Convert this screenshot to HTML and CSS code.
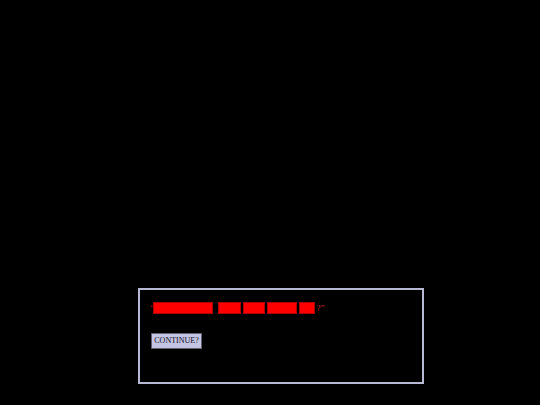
FILE: index.html
```html
<!DOCTYPE html>
<html>
<head>
<meta charset="utf-8">
<link rel="stylesheet" href="styles.css">
</head>
<body>
<div class="dialog">
  <div class="line">
    <span class="mark q">“</span>
    <span class="word w1"></span>
    <span class="mark comma">,</span>
    <span class="word w2"></span>
    <span class="word w3"></span>
    <span class="word w4"></span>
    <span class="word w5"></span>
    <span class="mark end">?”</span>
  </div>
  <button class="btn">CONTINUE?</button>
</div>
</body>
</html>
```
FILE: styles.css
```css
html, body {
  margin: 0;
  background: #000;
}
body {
  width: 540px;
  height: 405px;
  box-sizing: border-box;
  padding: 288px 0 0 138px;
  font-family: "Liberation Serif", serif;
}
.dialog {
  width: 286px;
  height: 96px;
  box-sizing: border-box;
  border: 2px solid #b8b8d4;
  padding: 12px 0 0 10px;
}
.line {
  display: flex;
  align-items: center;
  height: 12px;
}
.word {
  display: inline-block;
  height: 12px;
  box-sizing: border-box;
  background: #ff0000;
  border: 1px solid #b00000;
}
.w1 { width: 60px; }
.w2 { width: 23px; }
.w3 { width: 22px; margin-left: 2px; }
.w4 { width: 30px; margin-left: 2px; }
.w5 { width: 16px; margin-left: 2px; }
.mark {
  color: #b00000;
  font-size: 8px;
  line-height: 12px;
}
.q { margin-right: -1px; }
.comma { margin-left: 1px; margin-right: 2px; color: #500000; }
.end { margin-left: 2px; color: #d02020; font-size: 9px; }
.btn {
  display: block;
  margin: 19px 0 0 1px;
  width: 51px;
  height: 16px;
  padding: 0;
  box-sizing: border-box;
  background: #c4c4e4;
  border: 1px solid #606070;
  border-radius: 0;
  font-family: "Liberation Serif", serif;
  font-size: 8px;
  color: #101018;
  line-height: 14px;
  text-align: center;
}
```
